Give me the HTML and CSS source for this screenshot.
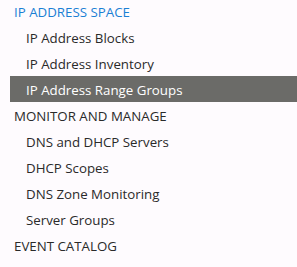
FILE: index.html
```html
<!DOCTYPE html>
<html lang="en">
<head>
    <meta charset="UTF-8">
    <title>IPAM</title>
    <link rel="stylesheet" href="styles.css">
</head>
<body>
    <ul class="nav">
        <li class="nav-head active">IP ADDRESS SPACE</li>
        <li class="nav-item">IP Address Blocks</li>
        <li class="nav-item">IP Address Inventory</li>
        <li class="nav-item selected">IP Address Range Groups</li>
        <li class="nav-head">MONITOR AND MANAGE</li>
        <li class="nav-item">DNS and DHCP Servers</li>
        <li class="nav-item">DHCP Scopes</li>
        <li class="nav-item">DNS Zone Monitoring</li>
        <li class="nav-item">Server Groups</li>
        <li class="nav-head">EVENT CATALOG</li>
    </ul>
</body>
</html>
```

FILE: styles.css
```css
body {
    margin: 0;
    background-color: #fefbfe;
    font-family: "Open Sans", sans-serif;
    font-size: 13.3px;
    color: #2a2a2a;
}
.nav {
    list-style: none;
    margin: -2px 0 0;
    padding: 0 0 0 10px;
}
.nav li {
    box-sizing: border-box;
    height: 26px;
    padding-top: 2px;
    line-height: 24px;
    white-space: nowrap;
}
.nav-head {
    padding-left: 4px;
}
.nav-head.active {
    color: #1a7fd4;
}
.nav-item {
    padding-left: 16px;
}
.nav-item.selected {
    background-color: #6b6b68;
    color: #fff;
}
```
